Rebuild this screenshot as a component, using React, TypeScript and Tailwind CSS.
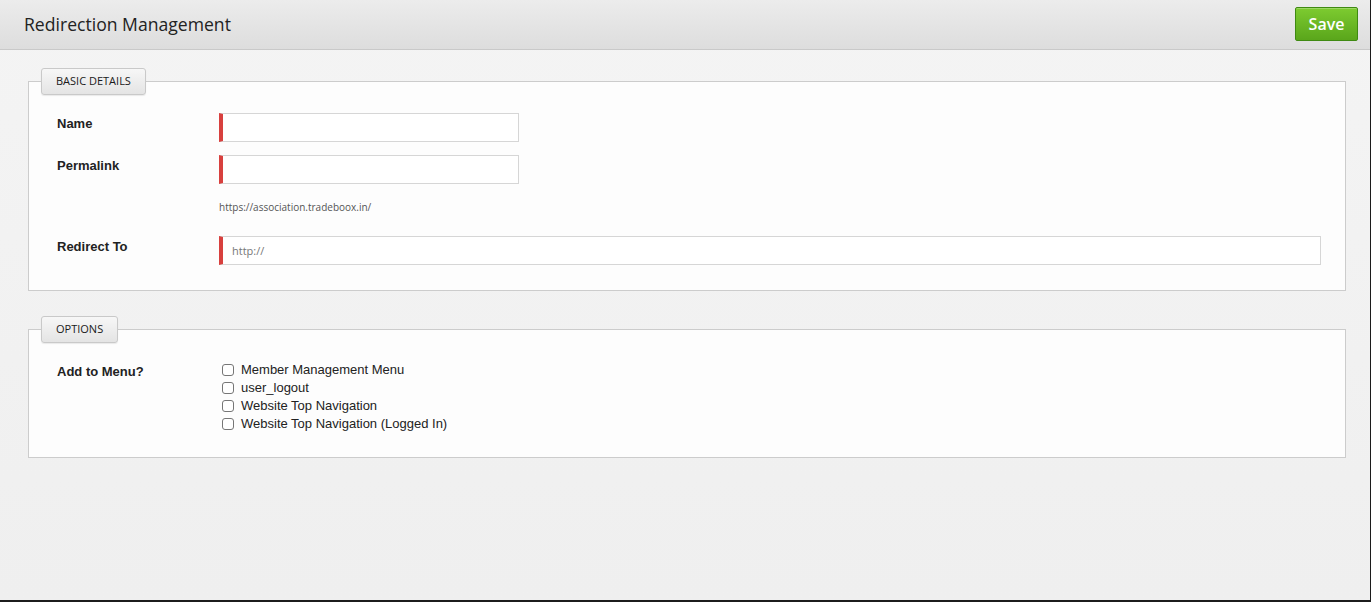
import React from 'react';

const menus = [
    'Member Management Menu',
    'user_logout',
    'Website Top Navigation',
    'Website Top Navigation (Logged In)',
];

const Legend: React.FC<{ title: string }> = ({ title }) => (
    <legend className="-ml-[16px] h-[27px] px-[14px] flex items-center rounded-[3px] border border-[#c9c9c9] bg-gradient-to-b from-[#f7f7f7] to-[#e4e4e4] text-[11px] text-[#1a1a1a] font-['Open_Sans',sans-serif] shadow-[0_1px_1px_rgba(0,0,0,0.08)]">
        {title}
    </legend>
);

const FieldInput: React.FC<{ wide?: boolean; placeholder?: string }> = ({ wide, placeholder }) => (
    <input
        type="text"
        placeholder={placeholder}
        className={`${wide ? 'flex-1' : 'w-[300px]'} h-[29px] bg-white border border-[#d6d6d6] border-l-[4px] border-l-[#d8403e] pl-[9px] text-[11px] text-[#555] placeholder:text-[#777] font-['Open_Sans',sans-serif] outline-none`}
    />
);

export default function App() {
    return (
        <div className="h-[602px] w-full box-border border-r border-b-2 border-[#1c1c1c] bg-gradient-to-b from-[#f4f4f4] to-[#efefef] overflow-hidden">
            <div className="h-[50px] flex items-center justify-between pl-[24px] pr-[12px] bg-gradient-to-b from-[#ececec] to-[#dddddd] border-b border-[#c9c9c9]">
                <h1 className="text-[17.6px] text-[#222] font-['Open_Sans',sans-serif]">Redirection Management</h1>
                <button className="w-[63px] h-[34px] -mt-[1px] rounded-[2px] border border-[#3f8a12] bg-gradient-to-b from-[#7dcb30] to-[#5aa61b] text-white text-[16px] font-semibold font-['Open_Sans',sans-serif] shadow-[inset_0_1px_0_rgba(255,255,255,0.25)]">
                    Save
                </button>
            </div>

            <fieldset className="mt-[18px] ml-[28px] mr-[24px] border border-[#cccccc] bg-[#fdfdfd] pl-[28px] pr-[24px] pt-[18px] pb-[25px] font-['Liberation_Sans',Arial,sans-serif]">
                <Legend title="BASIC DETAILS" />
                <div className="flex flex-col">
                    <div className="flex">
                        <label className="w-[162px] pt-[1px] text-[13px] font-bold text-[#222]">Name</label>
                        <FieldInput />
                    </div>
                    <div className="flex mt-[13px]">
                        <label className="w-[162px] pt-[1px] text-[13px] font-bold text-[#222]">Permalink</label>
                        <div className="flex flex-col">
                            <FieldInput />
                            <span className="mt-[16px] text-[10px] text-[#555] font-['Open_Sans',sans-serif]">https://association.tradeboox.in/</span>
                        </div>
                    </div>
                    <div className="flex mt-[21px]">
                        <label className="w-[162px] pt-[1px] text-[13px] font-bold text-[#222]">Redirect To</label>
                        <FieldInput wide placeholder="http://" />
                    </div>
                </div>
            </fieldset>

            <fieldset className="mt-[25px] ml-[28px] mr-[24px] border border-[#cccccc] bg-[#fdfdfd] pl-[28px] pr-[24px] pt-[18px] pb-[24px] font-['Liberation_Sans',Arial,sans-serif]">
                <Legend title="OPTIONS" />
                <div className="flex">
                    <label className="w-[162px] pt-[1px] text-[13px] font-bold text-[#222]">Add to Menu?</label>
                    <div className="flex flex-col">
                        {menus.map((m) => (
                            <label key={m} className="h-[18px] flex items-center text-[13px] text-[#222]">
                                <span className="ml-[3px] mr-[7px] w-[12px] h-[12px] rounded-[3px] border border-[#767676] bg-white" />
                                {m}
                            </label>
                        ))}
                    </div>
                </div>
            </fieldset>
        </div>
    );
}
